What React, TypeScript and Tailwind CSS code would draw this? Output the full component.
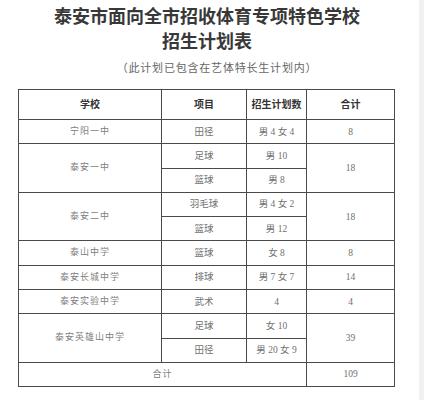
type Cell = { text: string; span?: string; bold?: boolean; school?: boolean };

const cells: Cell[] = [
  { text: '学校', bold: true },
  { text: '项目', bold: true },
  { text: '招生计划数', bold: true },
  { text: '合计', bold: true },

  { text: '宁阳一中', school: true },
  { text: '田径' },
  { text: '男 4 女 4' },
  { text: '8' },

  { text: '泰安一中', school: true, span: 'row-span-2' },
  { text: '足球' },
  { text: '男 10' },
  { text: '18', span: 'row-span-2' },
  { text: '篮球' },
  { text: '男 8' },

  { text: '泰安二中', school: true, span: 'row-span-2' },
  { text: '羽毛球' },
  { text: '男 4 女 2' },
  { text: '18', span: 'row-span-2' },
  { text: '篮球' },
  { text: '男 12' },

  { text: '泰山中学', school: true },
  { text: '篮球' },
  { text: '女 8' },
  { text: '8' },

  { text: '泰安长城中学', school: true },
  { text: '排球' },
  { text: '男 7 女 7' },
  { text: '14' },

  { text: '泰安实验中学', school: true },
  { text: '武术' },
  { text: '4' },
  { text: '4' },

  { text: '泰安英雄山中学', school: true, span: 'row-span-2' },
  { text: '足球' },
  { text: '女 10' },
  { text: '39', span: 'row-span-2' },
  { text: '田径' },
  { text: '男 20 女 9' },

  { text: '合计', school: true, span: 'col-span-3' },
  { text: '109' },
];

export default function App() {
  return (
    <div className="flex h-[400px] w-[424px] bg-white">
      <div className="w-[419px] pr-[5px]">
        <h1
          className="pt-[3px] text-center text-[18px] font-bold leading-[25px] text-[#383838]"
          style={{ fontFamily: '"Noto Sans CJK SC", sans-serif' }}
        >
          泰安市面向全市招收体育专项特色学校
          <br />
          招生计划表
        </h1>

        <p
          className="mt-[6px] pl-[20px] text-center text-[11px] leading-[16px] tracking-[0.8px] text-[#666]"
          style={{ fontFamily: '"Noto Sans CJK SC", serif' }}
        >
          （此计划已包含在艺体特长生计划内）
        </p>

        <div
          className="ml-[18px] mt-[14px] grid w-[377px] grid-cols-[143px_85px_60px_88px] grid-rows-[30px_repeat(11,24.3px)] border-l border-t border-[#4a4a4a]"
          style={{ fontFamily: '"Liberation Serif", "Noto Sans CJK SC", serif' }}
        >
          {cells.map((c, i) => (
            <div
              key={i}
              className={`flex items-center justify-center border-b border-r border-[#4a4a4a] ${c.span ?? ''} ${
                c.bold
                  ? 'text-[10px] font-bold text-[#333]'
                  : c.school
                    ? 'text-[9px] tracking-[1px] text-[#808080]'
                    : 'text-[9.5px] text-[#707070]'
              }`}
            >
              {c.text}
            </div>
          ))}
        </div>
      </div>
      <div className="flex-1 bg-[#f1f1f1]" />
    </div>
  );
}
